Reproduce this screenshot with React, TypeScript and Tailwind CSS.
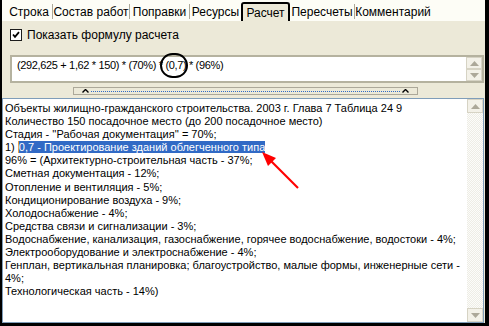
import React from "react";

const tabs = [
  { name: "Строка", w: "w-[46px]" },
  { name: "Состав работ", w: "w-[76px]" },
  { name: "Поправки", w: "w-[59px]" },
  { name: "Ресурсы", w: "w-[51px]" },
];

const lines = [
  "Объекты жилищно-гражданского строительства. 2003 г.  Глава 7 Таблица 24 9",
  "Количество 150 посадочное место (до 200 посадочное место)",
  "Стадия - ''Рабочая документация'' = 70%;",
  "HL",
  "96% = (Архитектурно-строительная часть - 37%;",
  "Сметная документация - 12%;",
  "Отопление и вентиляция - 5%;",
  "Кондиционирование воздуха - 9%;",
  "Холодоснабжение - 4%;",
  "Средства связи и сигнализации - 3%;",
  "Водоснабжение, канализация, газоснабжение, горячее водоснабжение, водостоки - 4%;",
  "Электрооборудование и электроснабжение - 4%;",
  "Генплан, вертикальная планировка; благоустройство, малые формы, инженерные сети -",
  "4%;",
  "Технологическая часть - 14%)",
];

const ScrollBtn = ({ up }: { up: boolean }) => (
  <div className="w-[16px] h-[14px] flex items-center justify-center bg-[#f3f1e8] border border-[#d6d3c4]">
    <svg width="9" height="5" viewBox="0 0 9 5">
      {up ? <path d="M0 5 L4.5 0 L9 5 Z" fill="#aca899" /> : <path d="M0 0 L4.5 5 L9 0 Z" fill="#aca899" />}
    </svg>
  </div>
);

const Chevron = () => (
  <svg width="7" height="4" viewBox="0 0 7 4">
    <path d="M0.5 3.5 L3.5 0.5 L6.5 3.5" stroke="#000" strokeWidth="1.4" fill="none" />
  </svg>
);

export default function App() {
  return (
    <div className="relative w-[489px] h-[326px] bg-[#ece9d8] border-l-2 border-r-4 border-b-[3px] border-black flex flex-col font-['Liberation_Sans',Arial,sans-serif] text-[11px] text-black overflow-hidden">
      {/* tabs */}
      <div className="h-[21px] flex items-end pl-[4px] bg-[#fdfdf6] shrink-0 text-[12px]">
        {tabs.map((t) => (
          <React.Fragment key={t.name}>
            <div className={`${t.w} h-[19px] flex items-center justify-center`}>{t.name}</div>
            {t.name !== "Ресурсы" && <div className="w-px h-[15px] mb-[2px] bg-[#aca899]" />}
          </React.Fragment>
        ))}
        <div className="w-[49px] h-[19px] flex items-center justify-center bg-[#ece9d8] border-2 border-b-0 border-black rounded-t-[3px]">
          Расчет
        </div>
        <div className="w-[64px] h-[19px] flex items-center justify-center">Пересчеты</div>
        <div className="w-px h-[15px] mb-[2px] bg-[#aca899]" />
        <div className="w-[76px] h-[19px] flex items-center justify-center">Комментарий</div>
      </div>

      {/* checkbox */}
      <div className="mt-[8px] ml-[8px] h-[12px] flex items-center gap-[5px] text-[12px]">
        <div className="w-[12px] h-[12px] bg-white border border-[#1c1c1c] flex items-center justify-center">
          <svg width="8" height="8" viewBox="0 0 8 8">
            <path d="M1 3.5 L3 5.8 L7 1.2" stroke="#000" strokeWidth="1.8" fill="none" />
          </svg>
        </div>
        <span>Показать формулу расчета</span>
      </div>

      {/* formula */}
      <div className="mt-[14px] ml-[8px] mr-[1px] h-[28px] bg-white border-2 border-[#b5b29f] flex">
        <div className="flex-1 pl-[5px] pt-[1px] leading-[14px] whitespace-nowrap tracking-[-0.35px]">
          (292,625 + 1,62 * 150) * (70%) *{" "}
          <span className="relative">
            (0,7)
            <span className="absolute left-[-5px] top-[-6px] w-[28px] h-[25px] rounded-full border-2 border-black" />
          </span>{" "}
          * (96%)
        </div>
        <div className="flex flex-col">
          <ScrollBtn up />
          <ScrollBtn up={false} />
        </div>
      </div>

      {/* splitter */}
      <div className="mt-[4px] ml-[71px] w-[345px] h-[8px] border border-[#aca899] flex items-center px-[8px] gap-[2px]">
        <Chevron />
        <div className="flex-1 border-t border-dotted border-[#316ac5]" />
        <Chevron />
      </div>

      {/* memo */}
      <div className="mt-[3px] mr-[1px] flex-1 bg-white border border-[#7f9db9] flex min-h-0">
        <div className="flex-1 pl-[2px] pt-[3px] leading-[13.1px] whitespace-nowrap overflow-hidden">
          {lines.map((l, i) =>
            l === "HL" ? (
              <div key={i}>
                1){" "}
                <span className="bg-[#316ac5] text-white border-l border-[#e8a040]">
                  0,7 - Проектирование зданий облегченного типа
                </span>
              </div>
            ) : (
              <div key={i}>{l}</div>
            )
          )}
        </div>
        <div className="w-[16px] flex flex-col bg-[repeating-conic-gradient(#eeede5_0_25%,#fcfcfa_0_50%)] bg-[length:2px_2px]">
          <ScrollBtn up />
          <div className="flex-1" />
          <ScrollBtn up={false} />
        </div>
      </div>

      {/* red arrow */}
      <svg className="absolute left-0 top-0 pointer-events-none" width="489" height="326">
        <line x1="296" y1="188" x2="268" y2="160" stroke="#f00" strokeWidth="2.2" />
        <path d="M260 152 L274 158 L266 166 Z" fill="#f00" />
      </svg>
    </div>
  );
}
